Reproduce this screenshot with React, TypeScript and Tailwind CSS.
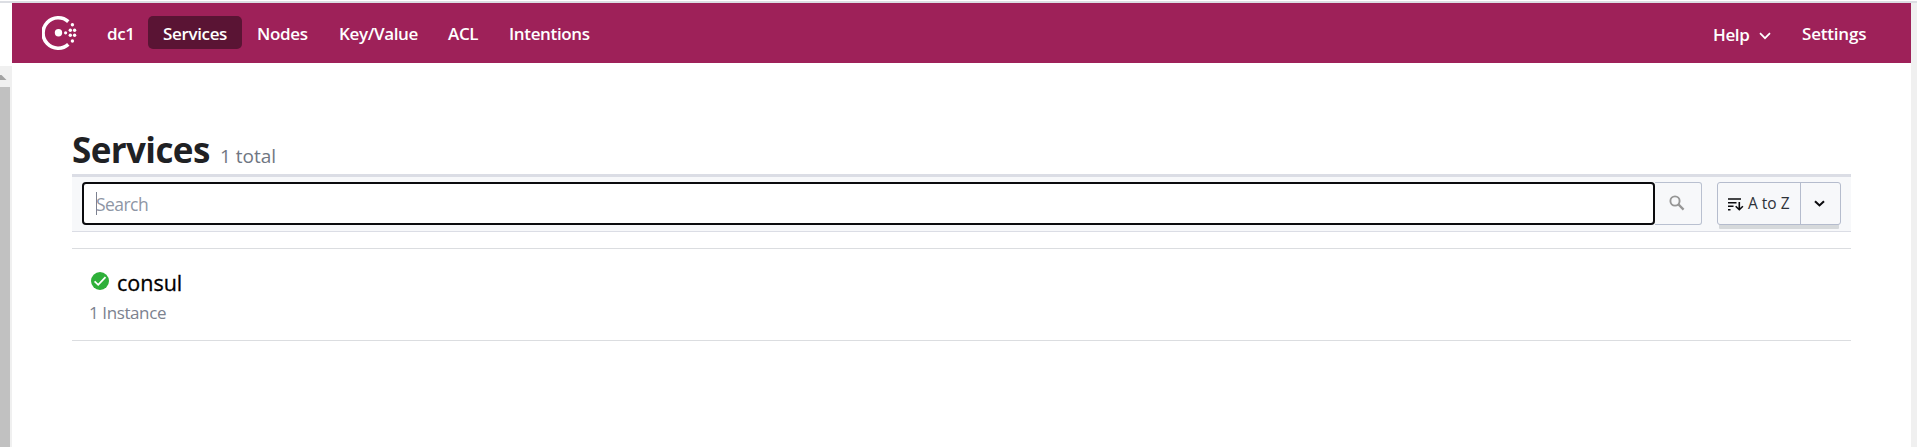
const navItems = [
  { label: 'dc1', cls: 'w-[41px]' },
  { label: 'Services', cls: 'w-[94px] pl-[15px] rounded-[5px] bg-[#5a1434]' },
  { label: 'Nodes', cls: 'ml-[15px] w-[82px]' },
  { label: 'Key/Value', cls: 'w-[109px]' },
  { label: 'ACL', cls: 'w-[61px]' },
  { label: 'Intentions', cls: 'w-[90px]' },
];

function Logo() {
  return (
    <svg className="mt-[13px] ml-[30px] h-[34px] w-[35px]" viewBox="0 0 35 34" fill="#fff">
      <path d="M26.3 5.6A15.2 15.2 0 1 0 26.3 28.4" fill="none" stroke="#fff" strokeWidth="3.6" />
      <circle cx="16.5" cy="16.8" r="3.7" />
      <circle cx="23.6" cy="16.8" r="1.6" />
      <circle cx="28.3" cy="14.3" r="1.7" />
      <circle cx="28.3" cy="19.3" r="1.7" />
      <circle cx="32.6" cy="14.3" r="1.7" />
      <circle cx="32.6" cy="19.3" r="1.7" />
      <circle cx="30.4" cy="8.7" r="1.7" />
      <circle cx="30.4" cy="25" r="1.7" />
    </svg>
  );
}

function NavBar() {
  return (
    <nav className="flex h-[60px] shrink-0 bg-[#9e2159] text-[17px] leading-[35px] font-semibold tracking-[-0.35px] text-white">
      <Logo />
      <ul className="mt-[13px] ml-[30px] flex h-[33px]">
        {navItems.map((n) => (
          <li key={n.label} className={'shrink-0 whitespace-nowrap ' + n.cls}>{n.label}</li>
        ))}
      </ul>
      <div className="mt-[13px] mr-[43px] ml-auto flex">
        <span className="w-[46px] pt-px">Help</span>
        <svg className="mt-[16px] mr-[31px] h-[8px] w-[12px]" viewBox="0 0 12 8" fill="none" stroke="#fff" strokeWidth="1.7">
          <path d="M1 1.2L6 6.2L11 1.2" />
        </svg>
        <span className="w-[66px] tracking-[-0.2px]">Settings</span>
      </div>
    </nav>
  );
}

function Toolbar() {
  return (
    <div className="flex h-[58px] border-t-[3px] border-b border-t-[#dbdde5] border-b-[#dbdde5] bg-[#f7f8fa] pt-[5px] pl-[10px]">
      <div className="flex h-[43px] w-[1573px] items-center rounded-[4px] border-2 border-[#0b0b0e] bg-white pl-[12px]">
        <span className="h-[23px] w-px bg-[#7c8190]" />
        <span className="-ml-px pt-px text-[17.5px] tracking-[-0.55px] text-[#8e96a5]">Search</span>
      </div>
      <div className="h-[43px] w-[47px] rounded-r-[3px] border border-l-0 border-[#b9c0d0] pt-[12px] pl-[14px]">
        <svg className="h-[16px] w-[16px]" viewBox="0 0 16 16" fill="none" stroke="#969696" strokeWidth="1.9">
          <circle cx="6" cy="6" r="4.6" />
          <path d="M9.4 9.4L14.6 14.6" strokeWidth="2.2" />
        </svg>
      </div>
      <div className="ml-[15px] flex h-[43px] w-[124px] rounded-[3px] border border-[#b5bccd] bg-[#f7f8fa] shadow-[0_6px_0_-2px_#d6d9db]">
        <div className="flex w-[83px] border-r border-[#b5bccd] pl-[10px]">
          <svg className="mt-[15px] h-[13px] w-[16px]" viewBox="0 0 16 13" fill="none" stroke="#0b0b0e" strokeWidth="1.6">
            <path d="M0 1H13M0 4.7H8.5M0 8.3H5.5M0 11.7H2.5" />
            <path d="M11.3 4V11.5M7.7 8.2L11.3 11.7L14.9 8.2" />
          </svg>
          <span className="ml-[4px] text-[15.5px] leading-[41px] whitespace-nowrap text-[#2d3138]">A to Z</span>
        </div>
        <svg className="mt-[17px] ml-[13px] h-[8px] w-[11px]" viewBox="0 0 11 8" fill="none" stroke="#0b0b0e" strokeWidth="2.1">
          <path d="M1 1.2L5.5 5.4L10 1.2" />
        </svg>
      </div>
    </div>
  );
}

export default function App() {
  return (
    <div className="flex h-[447px] w-[1917px] flex-col overflow-hidden bg-white pt-px font-['Open_Sans','Noto_Sans',sans-serif]">
      <div className="h-[2px] shrink-0 bg-[#dcdee3]" />
      <div className="flex min-h-0 grow">
        <aside className="mt-[63px] w-[12px] bg-[#f0f0f0] pt-[9px]">
          <svg className="h-[5px] w-[7px]" viewBox="0 0 7 5"><path d="M0 0H1.5L6.5 5H0Z" fill="#a3a3a3" /></svg>
          <div className="mt-[7px] h-[380px] w-[10px] bg-[#c1c1c1]" />
        </aside>
        <div className="flex w-[1899px] flex-col">
          <NavBar />
          <main className="px-[60px] pt-[64px]">
            <header className="flex h-[47px] items-baseline whitespace-nowrap">
              <h1 className="w-[148px] text-[35px] leading-[46px] font-bold tracking-[-0.6px] text-[#1f2124]">Services</h1>
              <em className="text-[19px] text-[#6f7682] not-italic">1 total</em>
            </header>
            <Toolbar />
            <ul className="mt-[16px]">
              <li className="h-[93px] border-y border-[#dbdde0] pt-[18px] pl-[18px]">
                <div className="flex h-[32px]">
                  <svg className="mt-[5px] ml-px h-[18px] w-[18px]" viewBox="0 0 18 18">
                    <circle cx="9" cy="9" r="9" fill="#2eb039" />
                    <path d="M3.6 9.4L7.2 12.8L14.5 5.2" fill="none" stroke="#fff" strokeWidth="1.8" />
                  </svg>
                  <span className="ml-[8px] text-[21.5px] leading-[31px] font-medium text-black [-webkit-text-stroke:0.3px_black]">consul</span>
                </div>
                <p className="-ml-px text-[17px] leading-[28px] tracking-[-0.4px] text-[#7c828f]">1 Instance</p>
              </li>
            </ul>
          </main>
        </div>
        <aside className="w-[6px] bg-[#f0f0f0]" />
      </div>
    </div>
  );
}
